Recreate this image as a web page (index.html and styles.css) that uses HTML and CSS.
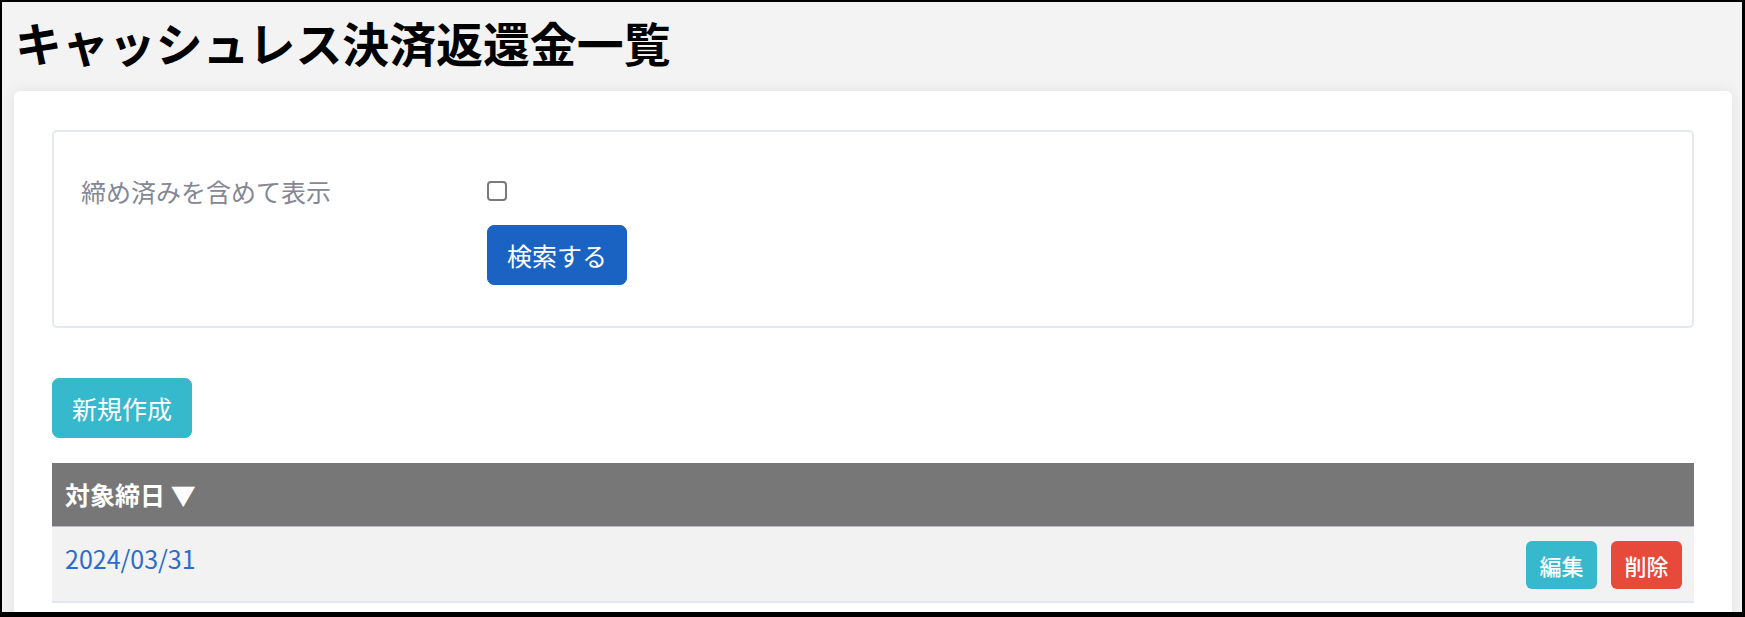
FILE: index.html
```html
<!DOCTYPE html>
<html lang="ja">
<head>
<meta charset="utf-8">
<title>キャッシュレス決済返還金一覧</title>
<link rel="stylesheet" href="styles.css">
</head>
<body>
<div class="frame">
  <header class="page-head">
    <h1 class="page-title">キャッシュレス決済返還金一覧</h1>
  </header>
  <main class="card">
    <section class="search-box">
      <div class="form-row">
        <label class="form-label" for="closed">締め済みを含めて表示</label>
        <div class="controls">
          <div class="check-line"><input class="check" type="checkbox" id="closed"></div>
          <button class="btn btn-primary" type="button">検索する</button>
        </div>
      </div>
    </section>
    <div class="actions">
      <button class="btn btn-info" type="button">新規作成</button>
    </div>
    <table class="list">
      <thead>
        <tr><th class="col-date">対象締日 ▼</th><th class="col-ops"></th></tr>
      </thead>
      <tbody>
        <tr>
          <td class="col-date"><a class="date-link" href="#">2024/03/31</a></td>
          <td class="col-ops">
            <div class="ops">
              <button class="btn-sm btn-info" type="button">編集</button>
              <button class="btn-sm btn-danger" type="button">削除</button>
            </div>
          </td>
        </tr>
      </tbody>
    </table>
  </main>
</div>
</body>
</html>
```

FILE: styles.css
```css
* { box-sizing: border-box; }

html, body {
  margin: 0;
  padding: 0;
  background: #ffffff;
}

body {
  font-family: "Noto Sans CJK JP", "Noto Sans", sans-serif;
  color: #222;
}

.frame {
  width: 1745px;
  height: 617px;
  overflow: hidden;
  border-style: solid;
  border-color: #000;
  border-width: 2px 3px 5px 2px;
  background: #f3f3f3;
}

.page-head {
  padding: 12px 0 21px 13px;
}

.page-title {
  margin: 0;
  font-size: 46.9px;
  line-height: 56px;
  font-weight: 700;
  color: #000;
  letter-spacing: 0;
}

.card {
  margin: 0 10px 0 12px;
  padding: 39px 38px 38px;
  background: #fff;
  border-radius: 6px;
  box-shadow: 0 0 14px rgba(0, 0, 0, 0.07);
  min-height: 600px;
}

.search-box {
  border: 2px solid #e6e8f1;
  border-radius: 5px;
  padding: 40px 27px 41px;
}

.form-row {
  display: grid;
  grid-template-columns: 406px 1fr;
}

.form-label {
  font-size: 25px;
  line-height: 38px;
  color: #858796;
}

.controls {
  display: flex;
  flex-direction: column;
  align-items: flex-start;
}

.check-line {
  height: 38px;
  display: flex;
  align-items: center;
}

.check {
  -webkit-appearance: none;
  appearance: none;
  margin: 0;
  width: 20px;
  height: 20px;
  border: 2px solid #7a7a7a;
  border-radius: 4px;
  background: #fff;
}

.btn {
  font-family: inherit;
  font-size: 25px;
  line-height: 38px;
  padding: 10px 19px;
  border: 1px solid transparent;
  border-radius: 7px;
  color: #fff;
  cursor: pointer;
}

.btn-primary {
  background: #1b63c3;
  border-color: #1b63c3;
  margin-top: 15px;
}

.btn-info {
  background: #36b9cc;
  border-color: #36b9cc;
}

.btn-danger {
  background: #e74a3b;
  border-color: #e74a3b;
}

.actions {
  margin-top: 50px;
}

.list {
  margin-top: 25px;
  width: 100%;
  border-collapse: collapse;
}

.list th {
  background: #777777;
  color: #fff;
  font-size: 25px;
  font-weight: 700;
  text-align: left;
  height: 63px;
  padding: 0 13px;
  border-bottom: 1px solid #b9bbc8;
  vertical-align: middle;
}

.list td {
  background: #f2f2f2;
  height: 76px;
  padding: 0 12px 0 13px;
  border-bottom: 2px solid #e3e6f0;
  vertical-align: middle;
  font-size: 25px;
}

.list td.col-date {
  padding-bottom: 12px;
}

.col-ops { text-align: right; }

.date-link {
  color: #2b6ccf;
  text-decoration: none;
}

.ops {
  display: flex;
  justify-content: flex-end;
  gap: 14px;
  padding-top: 2px;
}

.btn-sm {
  font-family: inherit;
  font-size: 22px;
  font-weight: 500;
  line-height: 46px;
  height: 48px;
  width: 71px;
  padding: 0;
  border: 1px solid transparent;
  border-radius: 6px;
  color: #fff;
  text-align: center;
}
```
